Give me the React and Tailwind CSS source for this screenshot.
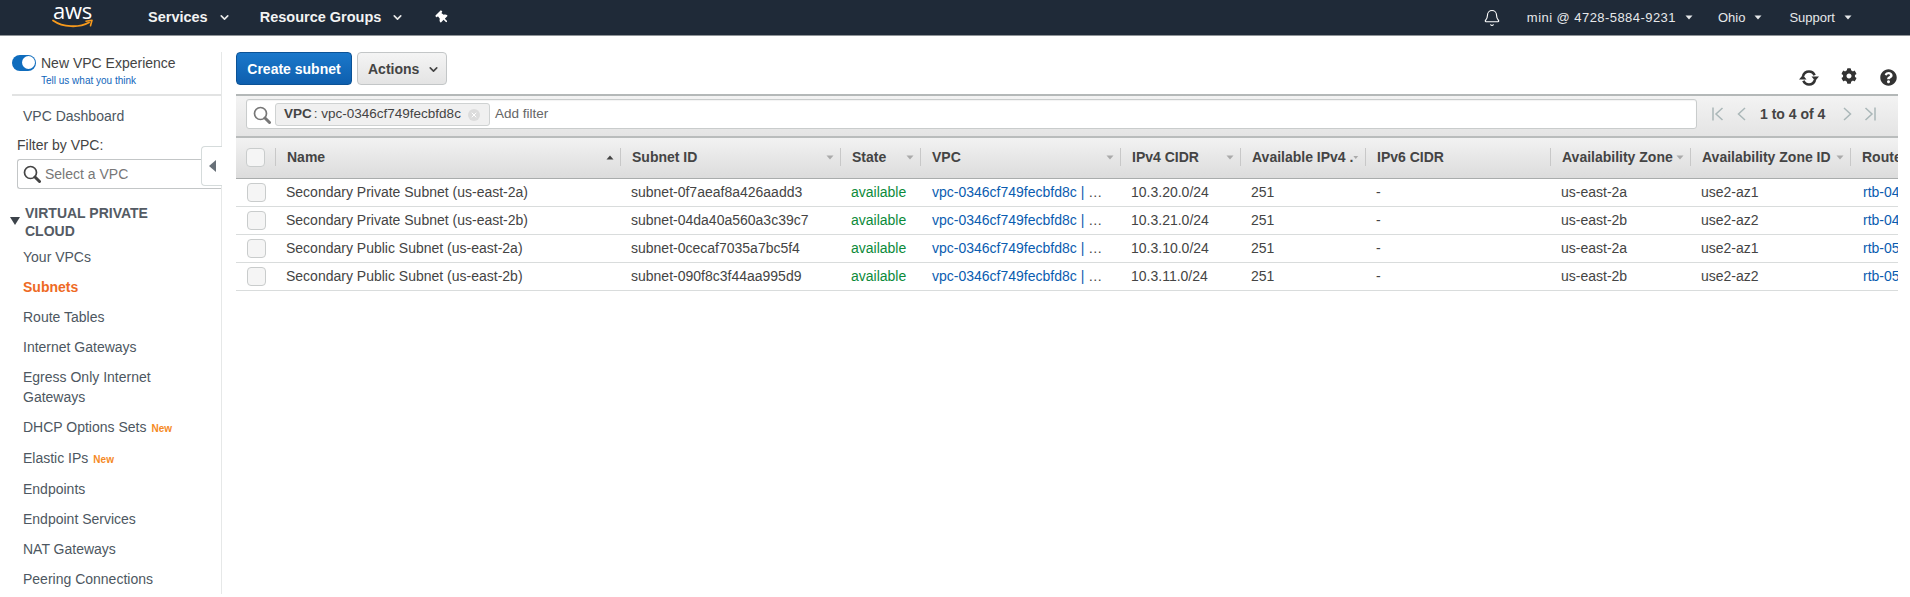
import React from 'react';
import { Bell, ChevronDown, X } from 'lucide-react';
import { FaCog, FaQuestionCircle, FaThumbtack } from 'react-icons/fa';

const NAV_ITEMS = [
    { label: 'Your VPCs', className: 'h-[30px]' },
    { label: 'Subnets', className: 'h-[30px] text-[#ee6a24] font-bold' },
    { label: 'Route Tables', className: 'h-[30px]' },
    { label: 'Internet Gateways', className: 'h-[30px]' },
    { label: 'Egress Only Internet Gateways', className: 'h-[50px] w-[150px]' },
    { label: 'DHCP Options Sets', badge: true, className: 'h-[31px]' },
    { label: 'Elastic IPs', badge: true, className: 'h-[31px]' },
    { label: 'Endpoints', className: 'h-[30px]' },
    { label: 'Endpoint Services', className: 'h-[30px]' },
    { label: 'NAT Gateways', className: 'h-[30px]' },
    { label: 'Peering Connections', className: 'h-[30px]' },
];

const COLUMNS = [
    { label: 'Name', width: 'w-[345px]', caret: 'up' },
    { label: 'Subnet ID', width: 'w-[220px]', caret: 'down' },
    { label: 'State', width: 'w-[80px]', caret: 'down' },
    { label: 'VPC', width: 'w-[200px]', caret: 'down' },
    { label: 'IPv4 CIDR', width: 'w-[120px]', caret: 'down' },
    { label: 'Available IPv4 .', width: 'w-[125px]', caret: 'down' },
    { label: 'IPv6 CIDR', width: 'w-[185px]' },
    { label: 'Availability Zone', width: 'w-[140px]', caret: 'down' },
    { label: 'Availability Zone ID', width: 'w-[160px]', caret: 'down' },
    { label: 'Route Table', width: 'w-[47px]' },
];

const VPC_ID = 'vpc-0346cf749fecbfd8c';

const SUBNETS = [
    { name: 'Secondary Private Subnet (us-east-2a)', id: 'subnet-0f7aeaf8a426aadd3', cidr: '10.3.20.0/24', az: 'us-east-2a', azId: 'use2-az1', rtb: 'rtb-04' },
    { name: 'Secondary Private Subnet (us-east-2b)', id: 'subnet-04da40a560a3c39c7', cidr: '10.3.21.0/24', az: 'us-east-2b', azId: 'use2-az2', rtb: 'rtb-04' },
    { name: 'Secondary Public Subnet (us-east-2a)', id: 'subnet-0cecaf7035a7bc5f4', cidr: '10.3.10.0/24', az: 'us-east-2a', azId: 'use2-az1', rtb: 'rtb-05' },
    { name: 'Secondary Public Subnet (us-east-2b)', id: 'subnet-090f8c3f44aa995d9', cidr: '10.3.11.0/24', az: 'us-east-2b', azId: 'use2-az2', rtb: 'rtb-05' },
];

const Caret = ({ className }) => (
    <svg viewBox="0 0 8 5" className={`w-[8px] h-[5px] ${className}`} fill="currentColor"><path d="M0.5 0.5h7L4 4.5z" /></svg>
);

const SearchIcon = ({ className }) => (
    <svg viewBox="0 0 18 18" className={`w-[18px] h-[18px] ${className}`} fill="none" stroke="currentColor">
        <circle cx="7.5" cy="7.5" r="6" strokeWidth="1.7" />
        <path d="M12 12l4.5 4.5" strokeWidth="3" strokeLinecap="round" />
    </svg>
);

const SyncIcon = () => (
    <svg viewBox="0 0 20 18" className="w-[20px] h-[18px] text-[#333]" fill="none">
        <path d="M4 7C5 4 7.2 2.5 10 2.5c2.6 0 4.6 1.4 5.6 3.7" stroke="currentColor" strokeWidth="2.6" />
        <path d="M16 11C15 14 12.8 15.5 10 15.5c-2.6 0-4.6-1.4-5.6-3.7" stroke="currentColor" strokeWidth="2.6" />
        <path d="M12.5 7.5H20L16.2 12zM7.5 10.5H0L3.8 6z" fill="currentColor" />
    </svg>
);

const TopItem = ({ label, className, bold }) => (
    <div className={`flex items-center ${bold ? 'font-bold text-[14.5px] text-[#f2f3f3]' : 'text-[13px] text-[#e6e8ea]'} ${className}`}>
        <span>{label}</span>
        {bold
            ? <ChevronDown size={13} strokeWidth={3} className="ml-[10px] text-[#e8e8e8]" />
            : <Caret className="ml-[9px] w-[7px] text-[#e6e8ea]" />}
    </div>
);

const Logo = () => (
    <div className="relative w-[42px] h-[35px] ml-[52px] shrink-0">
        <span className="absolute left-[1px] top-[0px] text-[22px] leading-[20px] text-white font-['Open_Sans',sans-serif] tracking-[-0.3px]">aws</span>
        <svg viewBox="0 0 42 10" className="absolute left-0 top-[19px] w-[42px] h-[10px]" fill="none">
            <path d="M1 1.5C11 8.5 27 9 37 3.5" stroke="#f79a1c" strokeWidth="1.8" strokeLinecap="round" />
            <path d="M34 2.2L40 1.2 38.5 6.8" stroke="#f79a1c" strokeWidth="1.6" strokeLinecap="round" strokeLinejoin="round" />
        </svg>
    </div>
);

const Sidebar = () => (
    <aside className="relative w-[222px] shrink-0 mt-4 border-r border-[#e6e8e8] text-[14px] leading-5 text-[#4d5761]">
        <div className="h-[44px] ml-3 border-b-2 border-[#e2e3e3]">
            <div className="flex items-center h-[20px] pt-[1px]">
                <div className="flex justify-end items-center w-[24px] h-[16px] rounded-full bg-[#0f6cbd] pr-[1px]">
                    <div className="w-[13px] h-[13px] rounded-full bg-white" />
                </div>
                <span className="ml-[5px] text-[#444]">New VPC Experience</span>
            </div>
            <div className="ml-[29px] mt-[1px] text-[10px] leading-[16px] text-[#1166bb]">Tell us what you think</div>
        </div>
        <div className="mt-[10px] ml-[23px] h-[20px]">VPC Dashboard</div>
        <div className="mt-[9px] ml-[17px] h-[20px] text-[#444]">Filter by VPC:</div>
        <div className="flex items-center ml-[17px] mt-[4px] h-[30px] rounded-l-[3px] border border-r-0 border-[#c3c6c7] pl-[5px] text-[#777]">
            <SearchIcon className="text-[#444]" />
            <span className="ml-[4px]">Select a VPC</span>
        </div>
        <div className="relative mt-[15px] ml-[25px] w-[150px] font-bold leading-[18px] text-[#545b64]">
            <svg viewBox="0 0 10 8" className="absolute left-[-15px] top-[13px] w-[10px] h-[8px]" fill="#3c434a"><path d="M0 0h10L5 8z" /></svg>
            VIRTUAL PRIVATE CLOUD
        </div>
        <nav className="mt-[2px] ml-[23px]">
            {NAV_ITEMS.map(item => (
                <div key={item.label} className={`pt-[5px] ${item.className}`}>
                    {item.label}
                    {item.badge && <span className="ml-[5px] text-[10px] font-bold text-[#f58a1f]">New</span>}
                </div>
            ))}
        </nav>
        <div className="absolute right-[-1px] top-[94px] flex items-center justify-center w-[21px] h-[40px] rounded-l-[4px] border border-r-0 border-[#d5dbdb] bg-white">
            <svg viewBox="0 0 7 12" className="w-[7px] h-[12px]" fill="#687078"><path d="M7 0v12L0 6z" /></svg>
        </div>
    </aside>
);

const Pager = () => (
    <div className="flex items-center w-[201px] h-[30px] pl-[15px] text-[#aab7b8]">
        <svg viewBox="0 0 12 14" className="w-[12px] h-[14px]" fill="none" stroke="currentColor" strokeWidth="1.5"><path d="M1 0.5v13M10.5 1L4 7l6.5 6" /></svg>
        <svg viewBox="0 0 9 14" className="w-[9px] h-[14px] ml-[13px]" fill="none" stroke="currentColor" strokeWidth="1.5"><path d="M8 1L1.5 7 8 13" /></svg>
        <span className="ml-[14px] w-[68px] text-[14px] font-bold text-[#444] whitespace-nowrap">1 to 4 of 4</span>
        <svg viewBox="0 0 9 14" className="w-[9px] h-[14px] ml-[15px]" fill="none" stroke="currentColor" strokeWidth="1.5"><path d="M1 1l6.5 6L1 13" /></svg>
        <svg viewBox="0 0 12 14" className="w-[12px] h-[14px] ml-[12px]" fill="none" stroke="currentColor" strokeWidth="1.5"><path d="M1.5 1L8 7l-6.5 6M11 0.5v13" /></svg>
    </div>
);

const FilterBar = () => (
    <div className="flex items-start h-[42px] border-t-2 border-[#b4b8b8] bg-gradient-to-b from-[#f3f3f3] to-[#e4e4e4] pl-[10px] pt-[3px]">
        <div className="flex items-center w-[1451px] h-[30px] pt-[1px] rounded-[3px] border border-[#c9cccc] bg-white text-[13.5px] shadow-[inset_0_1px_1px_rgba(0,0,0,0.05)]">
            <SearchIcon className="ml-[6px] text-[#777]" />
            <div className="flex items-center ml-[4px] w-[215px] h-[23px] rounded-[3px] border border-[#cfd2d2] bg-[#f0f0f0] pl-[8px] text-[#444]">
                <span className="font-bold">VPC</span>
                <span className="ml-[2px]">: {VPC_ID}</span>
                <span className="flex items-center justify-center ml-[7px] w-[12px] h-[12px] rounded-full bg-[#dcdcdc]">
                    <X size={8} strokeWidth={3} className="text-white" />
                </span>
            </div>
            <span className="ml-[5px] text-[#666]">Add filter</span>
        </div>
        <Pager />
    </div>
);

const Checkbox = () => (
    <div className="w-[19px] h-[19px] rounded-[4px] border border-[#c9cccc] bg-[#f5f5f5]" />
);

const SubnetsTable = () => (
    <div className="text-[14px] text-[#444]">
        <div className="flex items-center h-[43px] pb-[2px] border-t-2 border-[#b9bcbc] border-b border-b-[#a9acac] bg-gradient-to-b from-[#f2f2f2] to-[#dcdcdc] font-bold">
            <div className="flex items-center w-[40px] h-[18px] pl-[10px] border-r border-[#c8c8c8]"><Checkbox /></div>
            {COLUMNS.map(col => (
                <div key={col.label} className={`flex items-center justify-between shrink-0 h-[18px] pl-[11px] pr-[6px] border-r border-[#c8c8c8] last:border-r-0 whitespace-nowrap overflow-hidden ${col.width}`}>
                    <span>{col.label}</span>
                    {col.caret === 'up' && <Caret className="rotate-180 text-[#444]" />}
                    {col.caret === 'down' && <Caret className="text-[#aaa]" />}
                </div>
            ))}
        </div>
        {SUBNETS.map(row => (
            <div key={row.id} className="flex items-center h-[28px] border-b border-[#d9dcdc] whitespace-nowrap">
                <div className="w-[40px] pl-[11px] shrink-0"><Checkbox /></div>
                <div className="w-[345px] pl-[10px] shrink-0">{row.name}</div>
                <div className="w-[220px] pl-[10px] shrink-0">{row.id}</div>
                <div className="w-[80px] pl-[10px] shrink-0 text-[#0b8a3a]">available</div>
                <div className="w-[200px] pl-[11px] shrink-0 text-[#0a5cb0]">{VPC_ID} | <span className="text-[#444]">…</span></div>
                <div className="w-[120px] pl-[10px] shrink-0">{row.cidr}</div>
                <div className="w-[125px] pl-[10px] shrink-0">251</div>
                <div className="w-[185px] pl-[10px] shrink-0">-</div>
                <div className="w-[140px] pl-[10px] shrink-0">{row.az}</div>
                <div className="w-[160px] pl-[10px] shrink-0">{row.azId}</div>
                <div className="w-[47px] pl-[12px] shrink-0 overflow-hidden text-[#0a5cb0]">{row.rtb}</div>
            </div>
        ))}
    </div>
);

const App = () => (
    <div className="h-[597px] w-[1910px] overflow-hidden bg-white font-['Liberation_Sans',Arial,sans-serif]">
        <header className="flex items-center h-[36px] border-b border-[#8f9498] bg-[#1f2a38]">
            <Logo />
            <TopItem bold label="Services" className="ml-[54px]" />
            <TopItem bold label="Resource Groups" className="ml-[29px]" />
            <FaThumbtack size={13} className="ml-[32px] text-white rotate-[-45deg]" />
            <div className="flex items-center ml-auto pr-[58px]">
                <Bell size={18} strokeWidth={1.5} className="text-white" />
                <TopItem label="mini @ 4728-5884-9231" className="ml-[26px] tracking-[0.45px]" />
                <TopItem label="Ohio" className="ml-[25px]" />
                <TopItem label="Support" className="ml-[27px]" />
            </div>
        </header>
        <div className="flex">
            <Sidebar />
            <main className="w-[1662px] ml-[14px] pt-4">
                <div className="flex items-end h-[33px] mb-[9px]">
                    <button className="w-[116px] h-[33px] pt-[1px] rounded-[4px] border border-[#0b5296] bg-gradient-to-b from-[#1b78cb] to-[#0e5fae] text-[14px] font-bold text-white">Create subnet</button>
                    <button className="flex items-center w-[90px] h-[33px] pt-[1px] ml-[5px] pl-[10px] rounded-[4px] border border-[#c3c6c7] bg-gradient-to-b from-[#f4f4f4] to-[#e4e4e4] text-[14px] font-bold text-[#444]">
                        Actions
                        <ChevronDown size={13} strokeWidth={3} className="ml-[8px]" />
                    </button>
                    <div className="flex items-center ml-auto mr-[1px] mb-[-2px] text-[#333]">
                        <SyncIcon />
                        <FaCog size={16} className="ml-[22px] mb-[3px]" />
                        <FaQuestionCircle size={17} className="ml-[23px]" />
                    </div>
                </div>
                <FilterBar />
                <SubnetsTable />
            </main>
        </div>
    </div>
);

export default App;
